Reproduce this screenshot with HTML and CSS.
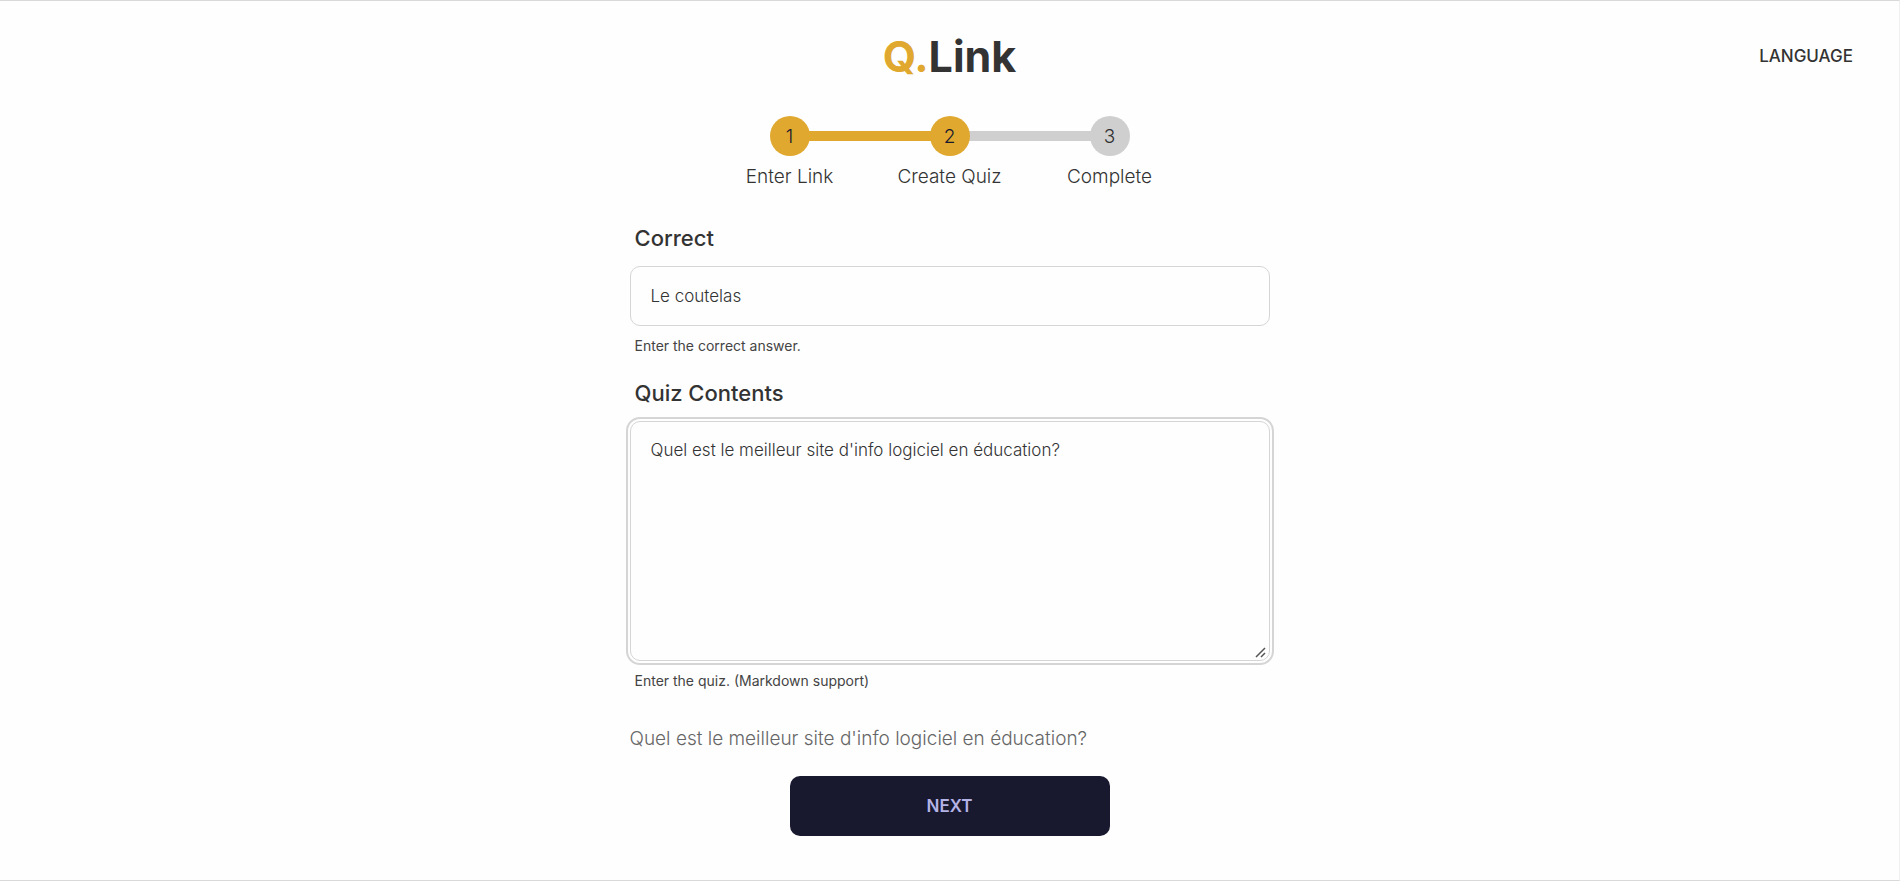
FILE: index.html
```html
<!DOCTYPE html>
<html lang="en">
<head>
    <meta charset="UTF-8">
    <meta name="viewport" content="width=device-width, initial-scale=1.0">
    <title>Q.Link</title>
    <link rel="stylesheet" href="styles.css">
</head>
<body>
    <div class="page">
        <header class="navbar">
            <a href="#" class="logo"><span>Q.</span>Link</a>
            <button type="button" class="language-btn">LANGUAGE</button>
        </header>

        <main class="container">
            <ul class="steps">
                <li class="step done"><span class="circle">1</span>Enter Link</li>
                <li class="step done"><span class="circle">2</span>Create Quiz</li>
                <li class="step"><span class="circle">3</span>Complete</li>
            </ul>

            <form id="quizForm">
                <div class="form-group">
                    <label for="correct">Correct</label>
                    <input type="text" id="correct" name="correct" value="Le coutelas">
                    <p class="hint">Enter the correct answer.</p>
                </div>
                <div class="form-group">
                    <label for="contents">Quiz Contents</label>
                    <textarea id="contents" name="contents" class="active" spellcheck="false">Quel est le meilleur site d'info logiciel en éducation?</textarea>
                    <p class="hint">Enter the quiz. (Markdown support)</p>
                </div>
                <div class="preview" id="preview">Quel est le meilleur site d'info logiciel en éducation?</div>
                <button type="submit" class="next-btn">NEXT</button>
            </form>
        </main>
    </div>

    <script>
        const contents = document.getElementById('contents');
        const preview = document.getElementById('preview');

        contents.addEventListener('input', function() {
            preview.textContent = contents.value;
        });

        document.getElementById('quizForm').addEventListener('submit', function(e) {
            e.preventDefault();
        });
    </script>
</body>
</html>
```

FILE: styles.css
```css
* {
    box-sizing: border-box;
}
body {
    margin: 0;
    font-family: Inter, "Noto Sans", sans-serif;
    font-size: 19px;
    font-weight: 300;
    line-height: 28px;
    color: #333;
    background-color: #fff;
}
.page {
    background-color: #fefefe;
    border-top: 1px solid #d9d9d9;
    border-right: 1px solid #f0f0f0;
    border-bottom: 1px solid #d9d9d9;
    padding-bottom: 44px;
}
.navbar {
    display: grid;
    grid-template-columns: 1fr auto 1fr;
    align-items: center;
    padding: 20px 46px;
}
.logo {
    grid-column: 2;
    font-size: 43px;
    font-weight: 700;
    line-height: 70px;
    color: #333;
    text-decoration: none;
}
.logo span {
    color: #e0a82e;
}
.language-btn {
    justify-self: end;
    padding: 0;
    border: none;
    background: none;
    font: 500 17px/24px Inter, sans-serif;
    color: #333;
    cursor: pointer;
}
.container {
    width: 100%;
    max-width: 640px;
    margin: 0 auto;
}
.steps {
    display: flex;
    justify-content: center;
    list-style: none;
    margin: 0;
    padding: 5px 0 0;
}
.step {
    position: relative;
    width: 160px;
    text-align: center;
}
.circle {
    position: relative;
    z-index: 1;
    display: block;
    width: 40px;
    height: 40px;
    margin: 0 auto 7px;
    border-radius: 50%;
    background-color: #cfcfcf;
    line-height: 41px;
}
/* bar that joins a step to the one before it */
.step + .step::before {
    content: "";
    position: absolute;
    top: 15px;
    left: -50%;
    width: 100%;
    height: 10px;
    background-color: #cfcfcf;
}
.step.done .circle,
.step.done + .step.done::before {
    background-color: #e0a82e;
}
.step.done .circle {
    color: #18182f;
}
#quizForm {
    padding-top: 20px;
}
.form-group {
    padding-top: 5px;
}
.form-group label {
    display: block;
    padding: 8px 5px 14px;
    font-size: 22px;
    font-weight: 500;
    line-height: 28px;
}
.form-group input,
.form-group textarea {
    display: block;
    width: 100%;
    padding: 0 20px;
    border: 1px solid #d5d5d5;
    border-radius: 10px;
    background-color: #fefefe;
    font: 300 17px/28px Inter, sans-serif;
    color: #333;
}
.form-group input {
    height: 60px;
}
.form-group textarea {
    height: 240px;
    padding: 14px 20px;
    resize: vertical;
}
.form-group textarea::-webkit-resizer {
    background: url("data:image/svg+xml,%3Csvg xmlns='http://www.w3.org/2000/svg' width='15' height='15' stroke='%23555' stroke-width='1.5'%3E%3Cpath d='M2 12L11 3M7 12L11 8'/%3E%3C/svg%3E") no-repeat;
}
.form-group input:focus,
.form-group textarea:focus,
.form-group .active {
    outline: 2px solid #d5d5d5;
    outline-offset: 2px;
}
.hint {
    margin: 0;
    padding: 10px 5px;
    font-size: 14px;
    font-weight: 400;
    line-height: 20px;
    color: #444;
}
.preview {
    padding: 24px 0 23px;
    color: #666;
}
.next-btn {
    display: block;
    width: 50%;
    height: 60px;
    margin: 0 auto;
    border: none;
    border-radius: 10px;
    background-color: #18182f;
    color: #b3b3e6;
    font: 600 17px/24px Inter, sans-serif;
    cursor: pointer;
}
```
